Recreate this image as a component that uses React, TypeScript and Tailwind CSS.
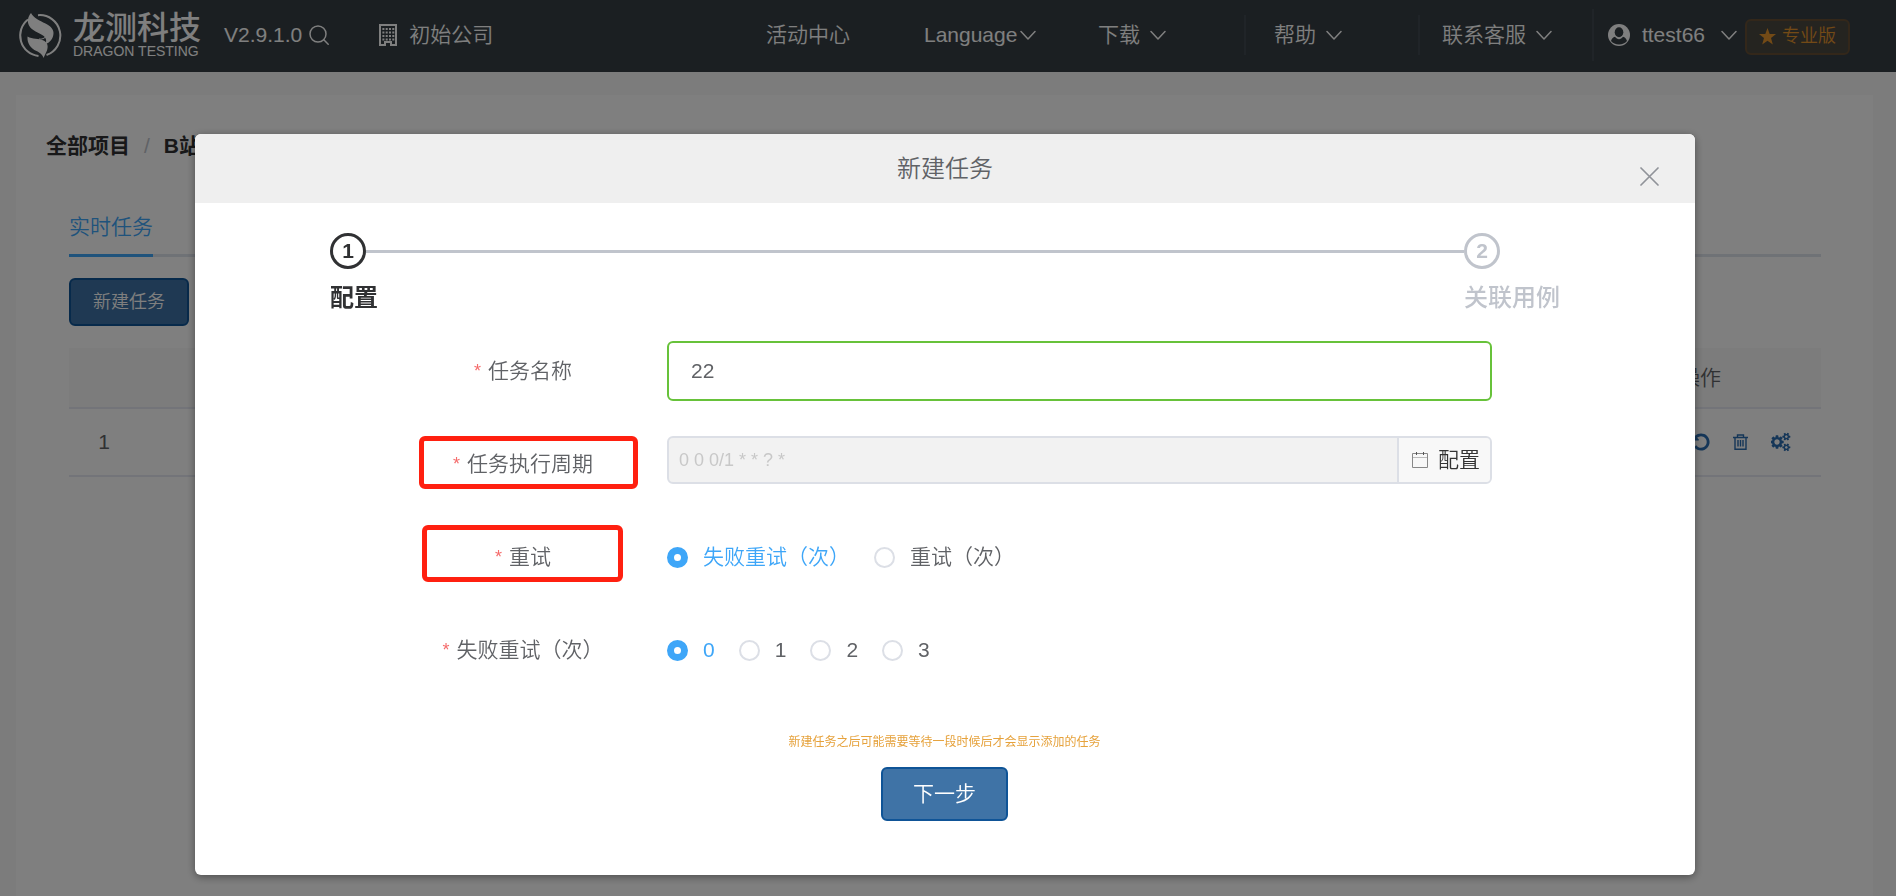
import type { ReactNode } from "react";

function Chevron() {
  return (
    <svg className="h-4 w-4 shrink-0" viewBox="0 0 16 16" fill="none" stroke="currentColor" strokeWidth="1.5" strokeLinecap="round" strokeLinejoin="round" aria-hidden="true">
      <path d="M1 4.5 8 12l7-7.5" />
    </svg>
  );
}

function LogoMark() {
  return (
    <svg className="h-[45px] w-11 shrink-0" viewBox="0 0 44 45" fill="none" stroke="currentColor" strokeWidth="2" aria-hidden="true">
      <path d="M10 6.500A20.500 20.500 0 0 0 20.500 43" />
      <path d="M20 2.200A20.500 20.500 0 0 1 28.500 42" />
      <g fill="currentColor" stroke="none">
        <path d="M13 0c-3.500 4-3.800 9-2 12.500C14 18 21 19.500 25 22.500c3 2 4 5 2.500 8.500 4-1 8-5.500 8-11 0-4-3-7-8-9.500C21.500 7.500 15.500 5 13 0z" />
        <path d="M9.500 23.500c5 3 11 1.500 16 4 4 2 5 5.500 3.500 10L25.500 45c-.8-3.500-4-5.500-7-7-6-2.500-9.500-8-9-14.500z" />
      </g>
      <path strokeWidth="1" d="M21 26c4 .5 7-1.500 7.500-4" />
    </svg>
  );
}

function NavItem({ children, divided = false, wide = true, gap = true }: { children: ReactNode; divided?: boolean; wide?: boolean; gap?: boolean }) {
  return (
    <button
      type="button"
      className={`flex h-10 w-[174px] shrink-0 items-center whitespace-nowrap ${wide ? "pl-7" : "pl-[22px]"} ${gap ? "gap-[10px]" : "gap-[3px]"} ${divided ? "border-l-2 border-[#414950]" : ""}`}
    >
      {children}
    </button>
  );
}

function TopBar() {
  return (
    <header className="flex h-[72px] items-center bg-[#363e44] pb-[2px] pl-[18px] pr-[46px] text-[21px] leading-7 text-white">
      <a href="#" className="flex shrink-0 items-center gap-[11px]">
        <LogoMark />
        <span className="flex flex-col">
          <span className="text-[32px] font-medium leading-8">龙测科技</span>
          <span className="whitespace-nowrap text-[14px] leading-[14px]">DRAGON TESTING</span>
        </span>
      </a>
      <div className="ml-[23px] flex shrink-0 items-center gap-[7px]">
        <span>V2.9.1.0</span>
        <svg className="h-5 w-5" viewBox="0 0 20 20" fill="none" stroke="currentColor" strokeWidth="1.500" strokeLinecap="round" aria-hidden="true">
          <circle cx="9" cy="9" r="8" />
          <path d="m14.800 14.800 4.400 4.400" />
        </svg>
      </div>
      <div className="ml-[50px] flex shrink-0 items-center gap-3">
        <svg className="h-[22px] w-[18px]" viewBox="0 0 18 22" fill="none" stroke="currentColor" aria-hidden="true">
          <path strokeWidth="2" d="M1 1h16v20h-5v-3H6v3H1z" />
          <path strokeWidth="2" strokeDasharray="2 1.300" d="M3.400 5h12M3.400 8.500h12M3.400 12h12M3.400 15.500h12" />
        </svg>
        <span>初始公司</span>
      </div>
      <nav className="ml-auto flex items-center">
        <a href="#" className="mr-[46px] whitespace-nowrap">活动中心</a>
        <NavItem gap={false}>Language<Chevron /></NavItem>
        <NavItem>下载<Chevron /></NavItem>
        <NavItem divided>帮助<Chevron /></NavItem>
        <NavItem divided wide={false}>联系客服<Chevron /></NavItem>
        <button type="button" className="flex h-[52px] items-center border-l-2 border-[#414950] pl-[14px]">
          <svg className="h-[22px] w-[22px]" viewBox="0 0 22 22" aria-hidden="true">
            <circle cx="11" cy="11" r="11" fill="currentColor" />
            <g fill="#363e44">
              <ellipse cx="11" cy="8.300" rx="4.300" ry="5" />
              <path d="M7 12.800c2.200 3.200 5.800 3.200 8 0 2 .6 3.400 2 4 4.200-1.800 2.200-4.700 3.600-8 3.600S4.800 19.200 3 17c.6-2.200 2-3.600 4-4.200z" />
            </g>
          </svg>
          <span className="ml-3 mr-4">ttest66</span>
          <Chevron />
        </button>
        <span className="ml-2 mt-1 flex h-9 shrink-0 items-center gap-[6px] rounded-md border-2 border-[#664f35] bg-[#4b4940] px-3 pb-[2px] text-[18px] text-[#e6952c]">
          <svg className="h-[17px] w-[17px]" viewBox="0 0 17 17" fill="currentColor" aria-hidden="true">
            <path d="m8.500 0 2.200 6H17l-5 4 1.800 6.500-5.300-3.800-5.300 3.800L5 10 0 6h6.300z" />
          </svg>
          专业版
        </span>
      </nav>
    </header>
  );
}

function RowActions() {
  return (
    <div className="flex items-center justify-end pr-[30px] text-[#2a6cb0]">
      <button type="button" aria-label="undo">
        <svg className="h-5 w-5" viewBox="0 0 1792 1792" fill="currentColor" aria-hidden="true">
          <path d="M1664 896q0 156-61 298t-164 245-245 164-298 61q-172 0-327-72.500t-264-204.500q-7-10-6.500-22.500t8.500-20.500l137-138q10-9 25-9 16 2 23 12 73 95 179 147t225 52q104 0 198.500-40.500t163.500-109.500 109.500-163.500 40.500-198.500-40.500-198.500-109.500-163.500-163.500-109.500-198.500-40.500q-98 0-188 35.500t-160 101.500l137 138q31 30 14 69-17 40-59 40h-448q-26 0-45-19t-19-45v-448q0-42 40-59 39-17 69 14l130 129q107-101 244.500-156.500t284.500-55.500q156 0 298 61t245 164 164 245 61 298z" />
        </svg>
      </button>
      <button type="button" aria-label="delete" className="ml-[22px]">
        <svg className="h-4 w-[15px]" viewBox="0 0 15 16" fill="none" stroke="currentColor" strokeWidth="1.400" aria-hidden="true">
          <path d="M0 3.500h15M4.500 3.300V1h6v2.300M2 3.500v11.700h11V3.500M5 6v6.500M7.500 6v6.500M10 6v6.500" />
        </svg>
      </button>
      <button type="button" aria-label="settings" className="ml-[23px]">
        <svg className="h-5 w-5" viewBox="0 0 1920 1792" fill="currentColor" aria-hidden="true">
          <path d="M832 896q0-106-75-181t-181-75-181 75-75 181 75 181 181 75 181-75 75-181zm768 512q0-52-38-90t-90-38-90 38-38 90q0 53 37.500 90.500t90.500 37.500 90.500-37.500 37.500-90.500zm0-1024q0-52-38-90t-90-38-90 38-38 90q0 53 37.500 90.500t90.500 37.500 90.500-37.500 37.500-90.500zm-384 421v185q0 10-7 19.500t-16 10.500l-155 24q-11 35-32 76 34 48 90 115 7 11 7 20 0 12-7 19-23 30-82.500 89.500t-78.500 59.500q-11 0-21-7l-115-90q-37 19-77 31-11 108-23 155-7 24-30 24h-186q-11 0-20-7.500t-10-17.500l-23-153q-34-10-75-31l-118 89q-7 7-20 7-11 0-21-8-144-133-144-160 0-9 7-19 10-14 41-53t47-61q-23-44-35-82l-152-24q-10-1-17-9.500t-7-19.500v-185q0-10 7-19.500t16-10.500l155-24q11-35 32-76-34-48-90-115-7-11-7-20 0-12 7-20 22-30 82-89t79-59q11 0 21 7l115 90q34-18 77-32 11-108 23-154 7-24 30-24h186q11 0 20 7.500t10 17.500l23 153q34 10 75 31l118-89q8-7 20-7 11 0 21 8 144 133 144 160 0 8-7 19-12 16-42 54t-45 60q23 48 34 82l152 23q10 2 17 10.500t7 19.500zm640 533v140q0 16-149 31-12 27-30 52 51 113 51 138 0 4-4 7-122 71-124 71-8 0-46-47t-52-68q-20 2-30 2t-30-2q-14 21-52 68t-46 47q-2 0-124-71-4-3-4-7 0-25 51-138-18-25-30-52-149-15-149-31v-140q0-16 149-31 13-29 30-52-51-113-51-138 0-4 4-7 4-2 35-20t59-34 30-16q8 0 46 46.500t52 67.500q20-2 30-2t30 2q51-71 92-112l6-2q4 0 124 70 4 3 4 7 0 25-51 138 17 23 30 52 149 15 149 31zm0-1024v140q0 16-149 31-12 27-30 52 51 113 51 138 0 4-4 7-122 71-124 71-8 0-46-47t-52-68q-20 2-30 2t-30-2q-14 21-52 68t-46 47q-2 0-124-71-4-3-4-7 0-25 51-138-18-25-30-52-149-15-149-31v-140q0-16 149-31 13-29 30-52-51-113-51-138 0-4 4-7 4-2 35-20t59-34 30-16q8 0 46 46.500t52 67.500q20-2 30-2t30 2q51-71 92-112l6-2q4 0 124 70 4 3 4 7 0 25-51 138 17 23 30 52 149 15 149 31z" />
        </svg>
      </button>
    </div>
  );
}

function TaskPage() {
  return (
    <main className="flex flex-1 bg-[#f9f9f9] pl-4 pr-[23px] pt-[23px]">
      <section className="flex-1 bg-white pt-9">
        <div className="flex items-center pl-[30px] text-[21px] font-bold leading-[30px] text-[#303133]">
          <a href="#">全部项目</a>
          <span className="mx-[14px] font-normal text-[#c0c4cc]">/</span>
          <a href="#">B站</a>
        </div>
        <div className="mt-12 pl-[53px] pr-[52px]">
          <div className="flex h-[48px] items-start border-b-[3px] border-[#dfe4ed]">
            <button type="button" className="h-[48px] border-b-[3px] border-[#3ea6f8] pb-[10px] text-[21px] leading-[35px] text-[#3ea6f8]">
              实时任务
            </button>
          </div>
          <button type="button" className="mt-[21px] block h-12 rounded-md border-2 border-[#0f5497] bg-[#3f73a6] px-[22px] text-[18px] leading-6 text-white">
            新建任务
          </button>
          <table className="mt-[22px] w-full table-fixed border-collapse text-center text-[21px] leading-7 text-[#606266]">
            <colgroup>
              <col className="w-[70px]" />
              <col />
              <col className="w-[242px]" />
            </colgroup>
            <thead>
              <tr className="h-[60px] border-b-2 border-[#e6e9f2] bg-[#f8f8f8]">
                <th />
                <th />
                <th className="font-[350]">操作</th>
              </tr>
            </thead>
            <tbody>
              <tr className="h-[68px] border-b-2 border-[#e6e9f2]">
                <td>1</td>
                <td />
                <td><RowActions /></td>
              </tr>
            </tbody>
          </table>
        </div>
      </section>
    </main>
  );
}

function Field({ label, htmlFor, mark, children }: { label: string; htmlFor?: string; mark?: ReactNode; children: ReactNode }) {
  const text = (
    <>
      <span className="self-start text-[18px] leading-7 text-[#f56c6c]">*</span>
      <span>{label}</span>
    </>
  );
  const cls = "flex w-full items-center justify-center gap-[7px] whitespace-nowrap";
  return (
    <div className="flex h-[60px] items-center">
      <div className="relative flex h-[60px] w-[252px] shrink-0 items-center">
        {htmlFor ? <label htmlFor={htmlFor} className={cls}>{text}</label> : <span className={cls}>{text}</span>}
        {mark}
      </div>
      <div className="ml-[18px] flex flex-1 items-center">{children}</div>
    </div>
  );
}

function Radio({ name, label, checked = false }: { name: string; label: string; checked?: boolean }) {
  return (
    <label className="flex items-center gap-[15px] whitespace-nowrap text-[#606266] has-checked:text-[#3ea6f8]">
      <input
        type="radio"
        name={name}
        defaultChecked={checked}
        className="h-[21px] w-[21px] appearance-none rounded-full border-2 border-[#dcdfe6] bg-white checked:border-[7px] checked:border-[#3ea6f8]"
      />
      {label}
    </label>
  );
}

function TaskDialog() {
  return (
    <div role="dialog" aria-labelledby="dialog-title" className="w-full max-w-[1500px] overflow-hidden rounded-md bg-white text-[21px] leading-7 text-[#606266] shadow-[0_2px_8px_rgba(0,0,0,0.4)]">
      <div className="relative flex h-[69px] items-center justify-center bg-[#efefef]">
        <h2 id="dialog-title" className="text-[24px] leading-8">新建任务</h2>
        <button type="button" aria-label="close" className="absolute right-9 top-[33px] text-[#909399]">
          <svg className="h-[19px] w-[19px]" viewBox="0 0 19 19" fill="none" stroke="currentColor" strokeWidth="1.700" strokeLinecap="round" aria-hidden="true">
            <path d="m1 1 17 17M18 1 1 18" />
          </svg>
        </button>
      </div>

      <ol className="flex pl-[135px] pr-[135px] pt-[30px] text-[#303133]">
        <li className="flex-1">
          <div className="flex items-center">
            <span className="flex h-9 w-9 items-center justify-center rounded-full border-[3px] border-current font-bold">1</span>
            <span className="h-[3px] flex-1 bg-[#c0c4cc]" />
          </div>
          <div className="mt-[13px] text-[24px] font-bold leading-8">配置</div>
        </li>
        <li className="text-[#c0c4cc]">
          <span className="flex h-9 w-9 items-center justify-center rounded-full border-[3px] border-current font-bold">2</span>
          <div className="mt-[13px] text-[24px] font-medium leading-8">关联用例</div>
        </li>
      </ol>

      <form className="flex flex-col pb-[54px] pl-[202px] pr-[203px] pt-[27px]">
        <div className="flex flex-col gap-[33px]">
          <Field label="任务名称" htmlFor="task-name">
            <input id="task-name" defaultValue="22" className="h-[60px] w-full rounded-md border-2 border-[#67c23a] px-[22px] outline-none" />
          </Field>
          <Field
            label="任务执行周期"
            htmlFor="task-cron"
            mark={<span className="absolute left-[22px] top-[2px] h-[53px] w-[219px] rounded-md border-[5px] border-[#ff2010]" />}
          >
            <div className="mb-[8px] flex h-12 w-full overflow-hidden rounded-md border-2 border-[#dcdfe6] bg-[#f2f2f2]">
              <input id="task-cron" disabled placeholder="0 0 0/1 * * ? *" className="min-w-0 flex-1 px-[10px] text-[18px] placeholder:text-[#c8c8c8]" />
              <button type="button" className="flex w-[93px] items-center gap-[10px] border-l-2 border-[#dcdfe6] bg-[#f8f8f8] pl-[13px] text-[#333333]">
                <svg className="h-4 w-4 shrink-0" viewBox="0 0 16 16" fill="none" stroke="#888" aria-hidden="true">
                  <path d="M.5 1.500h15v14H.5z" />
                  <path stroke="#bbb" d="M1 5.500h14" />
                  <path stroke="#555" d="M4.500 0v3M11.500 0v3" />
                </svg>
                <span>配置</span>
              </button>
            </div>
          </Field>
          <Field
            label="重试"
            mark={<span className="absolute left-[25px] top-[-2px] h-[57px] w-[201px] rounded-md border-[5px] border-[#ff2010]" />}
          >
            <div role="radiogroup" className="flex gap-6">
              <Radio name="retry-mode" label="失败重试（次）" checked />
              <Radio name="retry-mode" label="重试（次）" />
            </div>
          </Field>
          <Field label="失败重试（次）">
            <div role="radiogroup" className="flex gap-6">
              <Radio name="retry-count" label="0" checked />
              <Radio name="retry-count" label="1" />
              <Radio name="retry-count" label="2" />
              <Radio name="retry-count" label="3" />
            </div>
          </Field>
        </div>
        <p className="mt-[52px] text-center text-[12px] font-normal leading-5 text-[#e6a23c]">新建任务之后可能需要等待一段时候后才会显示添加的任务</p>
        <button type="button" className="mx-auto mt-[15px] h-[54px] rounded-md border-2 border-[#0f5497] bg-[#3f73a6] px-[30px] text-white">
          下一步
        </button>
      </form>
    </div>
  );
}

export default function App() {
  return (
    <div className="flex min-h-screen flex-col font-['Liberation_Sans','Noto_Sans_CJK_SC',sans-serif] font-[350]">
      <TopBar />
      <TaskPage />
      <div className="fixed inset-0 flex items-start justify-center overflow-hidden bg-black/50 pr-[6px] pt-[134px]">
        <TaskDialog />
      </div>
    </div>
  );
}
